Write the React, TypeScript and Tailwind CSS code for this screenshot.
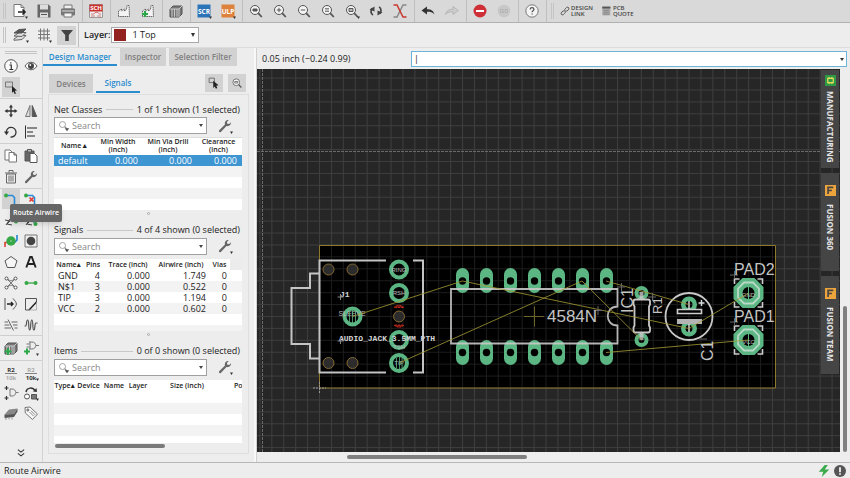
import type { ReactNode } from "react";
import { clsx } from "clsx";

function Glyph({ children, size = "size-4" }: { children: ReactNode; size?: string }) {
	return (
		<svg
			viewBox="0 0 16 16"
			className={clsx("shrink-0", size)}
			fill="none"
			stroke="#555"
			strokeWidth="1"
			aria-hidden="true"
		>
			{children}
		</svg>
	);
}

const MENU = <path d="M13 13.500h3l-1.500 2.500z" fill="#333" stroke="none" />;

const LENS = (
	<>
		<circle cx="7" cy="7" r="4.500" fill="#f4f4f4" />
		<path d="M10.200 10.200l3.600 3.800" strokeWidth="1.700" />
	</>
);

const FACTORY = (
	<path
		d="M2.500 13.500V8l3-2v2l3-2v2l2-1.500.5-4h2l.5 11z"
		fill="#f4f4f4"
		stroke="#666"
		strokeDasharray="1.6 .6"
	/>
);

const CHIP = (
	<>
		<path d="M2 6l3-3h9v8l-3 3H2z" fill="#777" stroke="#555" />
		<path d="M2 6h9v8M11 6l3-3M4 6v8M6.500 6v8M9 6v8" stroke="#ddd" strokeWidth=".8" />
	</>
);

const WRENCH = (
	<path
		d="M2.200 12.300L8 6.600C7.300 4 9 1.800 11.800 2L9.900 4l.4 1.800 1.900.3L14 4.300c.2 2.700-2 4.400-4.500 3.700l-5.700 6c-1.200.8-2.500-.6-1.600-1.700z"
		fill="#666"
		stroke="none"
	/>
);

type Tool = { name: string; icon: ReactNode; active?: boolean };

const FILE_TOOLS: Tool[][] = [
	[
		{
			name: "New",
			icon: (
				<>
					<path d="M2 1.500h7l3 3v9H2z" fill="#fff" stroke="#777" />
					<path d="M9 1.500v3h3" stroke="#777" />
					<path d="M6 9h7M10.500 6.500L13 9l-2.500 2.500" stroke="#222" strokeWidth="1.600" />
					{MENU}
				</>
			),
		},
		{
			name: "Save",
			icon: (
				<>
					<path d="M1.500 1.500h11l2 2v11h-13z" fill="#666" stroke="none" />
					<path d="M4 1.500h8v5H4zM4 9.500h8v5H4z" fill="#ddd" stroke="none" />
					<path d="M5 11.500h6" />
				</>
			),
		},
		{
			name: "Print",
			icon: (
				<>
					<path d="M4 2h8v4H4z" fill="#eee" stroke="#777" />
					<path d="M1.500 6h13v6h-13z" fill="#777" stroke="#777" />
					<path d="M4 10h8v4H4z" fill="#f4f4f4" stroke="#777" />
					<path d="M2 8h12" stroke="#ddd" />
				</>
			),
		},
	],
	[
		{
			name: "Schematic",
			icon: (
				<>
					<path d="M1.500 1.500h13v13h-13z" fill="#eee" stroke="#999" />
					<path d="M1.500 1.500h13v7h-13z" fill="#c9302c" stroke="none" />
					<text x="8" y="7.300" fontSize="6" fontWeight="bold" textAnchor="middle" fill="#fff" stroke="none">
						SCH
					</text>
					<path d="M3 11h3l1-1.500h3l1 1.500h2M3 13h4M9 13h4" stroke="#c66" strokeWidth=".8" />
				</>
			),
		},
	],
	[
		{ name: "Manufacturing", icon: FACTORY },
		{
			name: "Add to manufacturing",
			icon: (
				<>
					{FACTORY}
					<path d="M5 8v6M2 11h6" stroke="#2ca84a" strokeWidth="2.200" />
				</>
			),
		},
	],
	[{ name: "Library", icon: CHIP }],
	[
		{
			name: "Run script",
			icon: (
				<>
					<path d="M1.500 1.500h13v13h-13z" fill="#2c73b8" stroke="none" />
					<text x="8" y="10.500" fontSize="6.500" fontWeight="bold" textAnchor="middle" fill="#fff" stroke="none">
						SCR
					</text>
					{MENU}
				</>
			),
		},
		{
			name: "Run ULP",
			icon: (
				<>
					<path d="M1.500 1.500h13v13h-13z" fill="#dd813c" stroke="none" />
					<text x="8" y="10.500" fontSize="6.500" fontWeight="bold" textAnchor="middle" fill="#fff" stroke="none">
						ULP
					</text>
					{MENU}
				</>
			),
		},
	],
	[
		{
			name: "Zoom to fit",
			icon: (
				<>
					{LENS}
					<path d="M5 6h4v2H5z" fill="#555" />
				</>
			),
		},
		{
			name: "Zoom in",
			icon: (
				<>
					{LENS}
					<path d="M4.800 7h4.400M7 4.800v4.400" />
				</>
			),
		},
		{
			name: "Zoom out",
			icon: (
				<>
					{LENS}
					<path d="M4.800 7h4.400" />
				</>
			),
		},
		{
			name: "Zoom redraw",
			icon: (
				<>
					{LENS}
					<path d="M5 5.500h4M5 7h4M5 8.500h4" strokeWidth=".7" />
				</>
			),
		},
		{
			name: "Zoom select",
			icon: (
				<>
					{LENS}
					<path d="M5 5.500h4v3H5z" fill="#bbb" />
					{MENU}
				</>
			),
		},
		{
			name: "Refresh",
			icon: (
				<>
					<path d="M5 12c-2.500-1-2.500-5-.8-6.500M11 4c2.500 1 2.500 5 .8 6.500" stroke="#444" strokeWidth="1.700" />
					<path d="M1.500 6.500L6.500 3.500v5zM14.500 9.500l-5 3v-5z" fill="#444" stroke="none" />
				</>
			),
		},
		{
			name: "Crossing",
			icon: (
				<>
					<path d="M1.500 14h3.500l6-12h3.500" stroke="#888" strokeWidth="1.500" />
					<path d="M1.500 2h3.500l6 12h3.500" stroke="#c8372f" strokeWidth="1.500" />
				</>
			),
		},
	],
	[
		{
			name: "Undo",
			icon: (
				<path d="M1.500 7.500L7 3.500v2.700c4 0 6.500 1.300 7.500 5.300C12.500 9 10.500 8.800 7 8.800v2.700z" fill="#333" stroke="none" />
			),
		},
		{
			name: "Redo",
			icon: (
				<path d="M14.500 7.500L9 3.500v2.700c-4 0-6.500 1.300-7.500 5.300 2-2.500 4-2.700 7.500-2.700v2.700z" fill="#ccc" stroke="#aaa" strokeWidth=".7" />
			),
		},
	],
	[
		{
			name: "Stop",
			icon: (
				<>
					<circle cx="8" cy="8" r="6.500" fill="#cf3038" stroke="none" />
					<path d="M4 8h8" stroke="#fff" strokeWidth="2" />
				</>
			),
		},
		{
			name: "Go",
			icon: (
				<>
					<circle cx="8" cy="8" r="6.300" fill="#c8c8c8" stroke="none" />
					<path d="M7.500 6.500h-3v3h3V8H6M9 6.500h2.500v3H9z" stroke="#b4b4b4" />
				</>
			),
		},
	],
	[
		{
			name: "Help",
			icon: (
				<>
					<circle cx="8" cy="8" r="6.200" fill="#f4f4f4" stroke="#777" />
					<path d="M6.200 6.500c0-2.400 3.700-2.400 3.700 0 0 1.200-1.800 1.300-1.800 2.800M8.100 10.400v1.200" strokeWidth="1.300" />
				</>
			),
		},
	],
];

const PALETTE: { pad: string; tools: Tool[] }[] = [
	{
		pad: "gap-y-px pt-[2px] pb-px",
		tools: [
			{
				name: "Info",
				icon: (
					<>
						<circle cx="8" cy="8" r="6.300" fill="#fafafa" />
						<path d="M6.500 7h1.800v4.500M6.300 11.500h4M7.800 4.200v1.300" stroke="#333" strokeWidth="1.200" />
					</>
				),
			},
			{
				name: "Show",
				icon: (
					<>
						<path d="M2 8c3-5 9-5 12 0-3 5-9 5-12 0z" fill="#fff" />
						<circle cx="8" cy="8" r="3" fill="#444" stroke="none" />
						<circle cx="7.300" cy="7" r=".9" fill="#fff" stroke="none" />
					</>
				),
			},
			{
				name: "Group",
				active: true,
				icon: (
					<>
						<path d="M2.500 3h7v5h-7z" stroke="#777" />
						<path d="M9 7l5 4.500-2.300.3 1.300 2.600-1.300.5-1.200-2.500L9 13.800z" fill="#222" stroke="none" />
					</>
				),
			},
		],
	},
	{
		pad: "gap-y-px pt-[2px] pb-px",
		tools: [
			{
				name: "Move",
				icon: (
					<>
						<path d="M8 3v10M3 8h10" stroke="#333" strokeWidth="1.300" />
						<path d="M8 1.500l2 3H6zM8 14.500l2-3H6zM1.500 8l3-2v4zM14.500 8l-3-2v4z" fill="#333" stroke="none" />
					</>
				),
			},
			{
				name: "Mirror",
				icon: (
					<>
						<path d="M7 2.500v11H2.500z" fill="#ddd" stroke="#777" />
						<path d="M9.200 2.500v11h4.500z" fill="#555" />
					</>
				),
			},
			{
				name: "Rotate",
				icon: (
					<>
						<path d="M3.300 8.500C3 1.500 13.500 2 13 8.800c-.3 3-3 4.500-5.500 4.200" stroke="#333" strokeWidth="1.300" />
						<path d="M1 7.500h5l-2.500 3.800z" fill="#333" stroke="none" />
					</>
				),
			},
			{
				name: "Align",
				icon: (
					<>
						<path d="M2.500 1.500v13" stroke="#333" />
						<path d="M4 4h10M4 8h6M4 12h8" stroke="#888" strokeWidth="1.800" />
					</>
				),
			},
		],
	},
	{
		pad: "gap-y-px pt-[2px] pb-px",
		tools: [
			{
				name: "Copy",
				icon: (
					<>
						<path d="M2 2h5l2 2v8H2z" fill="#fff" stroke="#777" />
						<path d="M6 4.500h5l2.500 2.500v7H6z" fill="#fff" stroke="#777" />
						<path d="M11 4.500V7h2.500" />
					</>
				),
			},
			{
				name: "Paste",
				icon: (
					<>
						<path d="M2 3h9v10H2z" fill="#666" />
						<path d="M4.500 1.500h4v2.500h-4z" fill="#bbb" />
						<path d="M7 5.500h4.500L14 8v6.500H7z" fill="#fff" />
					</>
				),
			},
			{
				name: "Delete",
				icon: (
					<>
						<path d="M3.500 5h9v9h-9z" fill="#eee" stroke="#666" />
						<path d="M2 4h12M6 3.500v-2h4v2M6 6.500v6M8 6.500v6M10 6.500v6" stroke="#666" />
					</>
				),
			},
			{ name: "Change", icon: WRENCH },
		],
	},
	{
		pad: "gap-y-px",
		tools: [
			{
				name: "Route Airwire",
				active: true,
				icon: (
					<>
						<path d="M3 4.500h6.500l2 2V15" stroke="#2a8ad4" strokeWidth="1.600" />
						<circle cx="3" cy="4.500" r="2" fill="#36a845" stroke="none" />
					</>
				),
			},
			{
				name: "Ripup",
				icon: (
					<>
						<path d="M3 4.500h6.500l2 2V15" stroke="#2a8ad4" strokeWidth="1.600" />
						<circle cx="3" cy="4.500" r="2" fill="#36a845" stroke="none" />
						<path d="M6.500 6.500l4 4m0-4l-4 4" stroke="#e03c35" strokeWidth="1.700" />
					</>
				),
			},
			{
				name: "Route multiple",
				icon: (
					<>
						<path d="M2 8l5 1-3 3 5 1M3 13l4-6" stroke="#444" />
						<circle cx="13" cy="9.500" r="2" fill="#36a845" stroke="none" />
					</>
				),
			},
			{
				name: "Fanout",
				icon: (
					<>
						<path d="M2 8l5 1-3 3 5 1M3 13l4-6" stroke="#444" />
						<path d="M7 6l5 6" stroke="#2a8ad4" />
						<circle cx="12.500" cy="12" r="2" fill="#36a845" stroke="none" />
					</>
				),
			},
			{
				name: "Via",
				icon: (
					<>
						<path d="M2 14V9.500h3" stroke="#d94b3f" strokeWidth="1.700" />
						<path d="M14 2v5l-3 3" stroke="#2a8ad4" strokeWidth="1.700" />
						<circle cx="8" cy="8" r="4.700" fill="#36a845" stroke="none" />
						<circle cx="8" cy="8" r="1" fill="#7cc586" stroke="none" />
					</>
				),
			},
			{
				name: "Hole",
				icon: (
					<>
						<path d="M2 2h12v12H2z" fill="#eee" stroke="#777" />
						<circle cx="8" cy="8" r="4.300" fill="#444" stroke="none" />
					</>
				),
			},
			{ name: "Polygon", icon: <path d="M8 2.500l6 4.300-2.300 6.700H4.300L2 6.800z" fill="#f6f6f6" /> },
			{ name: "Text", icon: <path d="M3.300 13.500L7.200 3h1.600l3.900 10.500M5 10h6" stroke="#222" strokeWidth="1.900" /> },
			{
				name: "Ratsnest",
				icon: (
					<>
						<path d="M4 4l8 8M12 4l-8 8M4.500 3.500c2 3 5 3 7 0M4.500 12.500c2-3 5-3 7 0" stroke="#777" />
						<circle cx="3.500" cy="3.500" r="1.500" fill="#fff" />
						<circle cx="12.500" cy="3.500" r="1.500" fill="#fff" />
						<circle cx="3.500" cy="12.500" r="1.500" fill="#fff" />
						<circle cx="12.500" cy="12.500" r="1.500" fill="#fff" />
					</>
				),
			},
			{
				name: "Signal",
				icon: (
					<>
						<path d="M3 8h10" stroke="#36a845" strokeWidth="1.300" />
						<circle cx="3.500" cy="8" r="2" fill="#36a845" stroke="none" />
						<circle cx="12.500" cy="8" r="2" fill="#36a845" stroke="none" />
					</>
				),
			},
			{
				name: "Split",
				icon: (
					<>
						<path d="M2 2v12M10 2.500c4.500 5 4.500 6 0 11" />
						<path d="M4 8h6M8 6l2 2-2 2" stroke="#222" strokeWidth="1.300" />
					</>
				),
			},
			{
				name: "Miter",
				icon: (
					<>
						<path d="M2.500 14V2.500h11V6M2.500 14H6" />
						<path d="M6 14l7.500-8" stroke="#222" strokeWidth="1.500" />
						<path d="M13.500 6v8H6" stroke="#999" strokeWidth=".7" />
					</>
				),
			},
			{
				name: "Slice",
				icon: <path d="M1.500 5h3.500M1.500 8h5M1.500 11h6.500M8.500 5h6M10 8h4.500M11.500 11h3M5 2.500l5.500 11" stroke="#666" />,
			},
			{
				name: "Meander",
				icon: (
					<path
						d="M1.500 9h1c1.500 0 .5-6 2.200-6s.4 10 2 10 .4-10 2.100-10 .4 10 2 10 .5-7 2.200-7h1.500"
						strokeWidth="1.200"
					/>
				),
			},
		],
	},
	{
		pad: "py-0.5",
		tools: [
			{
				name: "Add part",
				icon: (
					<>
						{CHIP}
						<path d="M5 8v7M1.500 11.500h7" stroke="#2ca84a" strokeWidth="2" />
					</>
				),
			},
			{
				name: "Add gate",
				icon: (
					<>
						<path d="M6 2h3c5 0 5 7 0 7H6M7 2v7M3.500 4h3M3.500 7h3M13 5.500h3" stroke="#777" />
						<path d="M4 8.500v6M1 11.500h6" stroke="#2ca84a" strokeWidth="2" />
						{MENU}
					</>
				),
			},
		],
	},
	{
		pad: "pt-[2px]",
		tools: [
			{
				name: "Name",
				icon: (
					<g stroke="none" fontSize="6" fontWeight="bold" textAnchor="middle">
						<text x="8" y="7" fill="#333">R2</text>
						<text x="8" y="14.500" fill="#aaa">10k</text>
						<path d="M2 8h12v.8H2z" fill="#666" />
					</g>
				),
			},
			{
				name: "Value",
				icon: (
					<g stroke="none" fontSize="6" fontWeight="bold" textAnchor="middle">
						<text x="8" y="7" fill="#aaa">R2</text>
						<text x="8" y="14.500" fill="#333">10k</text>
						<path d="M2 8h12v.8H2z" fill="#666" />
						{MENU}
					</g>
				),
			},
			{
				name: "Gate swap",
				icon: (
					<>
						<path d="M7 4h2c5 0 5 7 0 7H7zM13 7.500h2.500" stroke="#777" />
						<path d="M3.500 1v4M1.500 3h4M3.500 11v4M1.500 13h4" stroke="#333" strokeWidth="1.200" />
					</>
				),
			},
			{
				name: "Replace",
				icon: (
					<>
						<path d="M3 7c1-5 7-5 9-1" stroke="#333" strokeWidth="1.500" />
						<path d="M10 6.500l4 .5-.5-4z" fill="#333" stroke="none" />
						<circle cx="4" cy="11.500" r="2.500" fill="#fff" />
						<path d="M8.500 9.500h5v4.500h-5z" fill="#777" />
						{MENU}
					</>
				),
			},
			{
				name: "Package",
				icon: (
					<>
						<path d="M1.500 9.500L6 4.500l8.500-1L11 9z" fill="#888" stroke="none" />
						<path d="M1.500 9.500L11 9v3l-9.500 1zM11 9l3.500-5.500v3L11 12z" fill="#555" stroke="none" />
						<path d="M3 13v2M6 12.500v2M9 12.500v2" stroke="#999" />
					</>
				),
			},
			{
				name: "Attribute",
				icon: (
					<>
						<path d="M2 2.500l5-.5 7.500 7-5 5.500L2.300 8z" fill="#f6f6f6" stroke="#777" />
						<circle cx="4.800" cy="5" r="1" />
						<path d="M6.500 7l4 4M8 5.700l4 4" stroke="#888" />
					</>
				),
			},
		],
	},
];

const VIEW_TOOLS: Tool[] = [
	{
		name: "Layers",
		icon: (
			<>
				<path d="M1 12l5-3.500h7L9 12.500l-8 .8z" fill="#ddd" stroke="#666" />
				<path d="M1 9l5-3.500h7L9 9.500z" fill="#ddd" stroke="#666" />
				<path d="M1 6l5-3.500 7-.5L9 6z" fill="#555" />
				{MENU}
			</>
		),
	},
	{
		name: "Grid",
		icon: (
			<>
				<path d="M4.500 1.500v12M8 1.500v12M11.500 1.500v12M2 4h12M2 7.500h12M2 11h12" stroke="#777" />
				{MENU}
			</>
		),
	},
	{ name: "Filter", active: true, icon: <path d="M2 3h12L9.800 8v6H6.200V8z" fill="#444" stroke="none" /> },
];

const NET_CLASSES = [{ name: "default", width: "0.000", drill: "0.000", clearance: "0.000" }];

const SIGNALS = [
	{ name: "GND", pins: 4, trace: "0.000", airwire: "1.749", vias: 0 },
	{ name: "N$1", pins: 3, trace: "0.000", airwire: "0.522", vias: 0 },
	{ name: "TIP", pins: 3, trace: "0.000", airwire: "1.194", vias: 0 },
	{ name: "VCC", pins: 2, trace: "0.000", airwire: "0.602", vias: 0 },
];

const DOCK = [
	{ label: "MANUFACTURING", kind: "board", pad: "gap-[5px] pt-[5px]" },
	{ label: "FUSION 360", kind: "fusion", pad: "gap-2 pt-3" },
	{ label: "FUSION TEAM", kind: "fusion", pad: "gap-2 pt-3" },
];

const PINS = [462, 486, 510, 534, 558, 582, 606];

function ToolButton({ tool, className }: { tool: Tool; className: string }) {
	return (
		<button
			type="button"
			aria-label={tool.name}
			className={clsx("flex items-center justify-center", tool.active && "bg-[#d2d2d2]", className)}
		>
			<Glyph>{tool.icon}</Glyph>
		</button>
	);
}

function Divider() {
	return <div className="mr-px ml-0.5 w-px self-stretch bg-[#bfbfbf]" />;
}

function Grip() {
	return <div className="mr-0.5 ml-[3px] h-4 w-[3px] border-x border-[#c4c4c4]" />;
}

function MainToolbar() {
	return (
		<header className="flex h-[23px] items-center border-b border-[#b0b0b0] bg-[#d9d9d9]">
			<Grip />
			{FILE_TOOLS.map((group, i) => (
				<div key={i} className="flex items-center self-stretch">
					{i > 0 && <Divider />}
					{group.map((tool) => (
						<ToolButton key={tool.name} tool={tool} className="h-5 w-6" />
					))}
				</div>
			))}
			<Divider />
			<Grip />
			<a href="#design-link" className="ml-1 flex items-center gap-px text-[6px] leading-[6px] font-semibold text-[#444]">
				<Glyph size="size-2.5">
					<path d="M7 9.500c-2-2 2-6 4-7.500 2-1 4 1 3 3L11 8.500M9 6.500c2 2-2 6-4 7.500-2 1-4-1-3-3L5 7.500" strokeWidth="1.600" />
				</Glyph>
				<span className="flex flex-col">
					<span>DESIGN</span>
					<span>LINK</span>
				</span>
			</a>
			<a href="#pcb-quote" className="ml-2 flex items-center gap-0.5 text-[6px] leading-[6px] font-semibold text-[#444]">
				<Glyph size="size-2.5">
					<path d="M2 1h13v14H2z" fill="#aaa" stroke="none" />
					<path d="M2 1h13v3H2z" fill="#555" stroke="none" />
					<path d="M4 7h9M4 10h9M4 13h9" stroke="#777" />
				</Glyph>
				<span className="flex flex-col">
					<span>PCB</span>
					<span>QUOTE</span>
				</span>
			</a>
		</header>
	);
}

function ViewToolbar() {
	return (
		<div className="flex h-[25px] items-center border-b border-[#dcdcdc] bg-[#ededed]">
			<Grip />
			<div className="ml-[3px] flex gap-1">
				{VIEW_TOOLS.map((tool) => (
					<ToolButton key={tool.name} tool={tool} className="h-[19px] w-[19px]" />
				))}
			</div>
			<Divider />
			<label htmlFor="layer" className="ml-1 text-[9px] font-semibold">
				Layer:
			</label>
			<div className="relative ml-px">
				<span className="absolute top-0.5 left-[3px] size-3 bg-[#92211f]" />
				<select
					id="layer"
					className="block h-4 w-[88px] appearance-none border border-[#a8a8a8] bg-white pl-5 text-[9px] leading-[14px] font-medium"
				>
					<option>1 Top</option>
				</select>
				<span className="pointer-events-none absolute top-[6px] right-1 border-x-[2px] border-t-[4px] border-x-transparent border-t-[#333]" />
			</div>
		</div>
	);
}

function Palette() {
	return (
		<nav aria-label="Tools" className="flex w-[43px] shrink-0 flex-col border-r border-[#d4d4d4]">
			<div className="mx-[5px] mt-[3px] h-[3px] border-y border-[#c4c4c4]" />
			{PALETTE.map((group, i) => (
				<div
					key={i}
					className={clsx(
						"grid grid-cols-2 px-px",
						i < PALETTE.length - 1 && "border-b border-[#cfcfcf]",
						group.pad,
					)}
				>
					{group.tools.map((tool) => (
						<div
							key={tool.name}
							className={clsx("relative flex justify-center", tool.name === "Group" && "col-span-2 w-5")}
						>
							<ToolButton tool={tool} className="h-5 w-[18px]" />
							{tool.name === "Route Airwire" && (
								<div
									role="tooltip"
									className="absolute top-[15px] left-[9px] z-10 rounded-xs bg-[#666] px-[3px] text-[7px] leading-[18px] font-semibold whitespace-nowrap text-white shadow-md"
								>
									Route Airwire
								</div>
							)}
						</div>
					))}
				</div>
			))}
			<button type="button" aria-label="More tools" className="mt-auto mb-1 flex justify-center">
				<Glyph size="size-2.5">
					<path d="M3 2.500l5 4 5-4M3 8.500l5 4 5-4" stroke="#333" strokeWidth="1.700" />
				</Glyph>
			</button>
		</nav>
	);
}

function Section({ title, count, children }: { title: string; count: string; children: ReactNode }) {
	return (
		<section>
			<div className="flex h-[15px] items-center text-[9px] leading-3 font-medium">
				<h2>{title}</h2>
				<div className="mx-1 h-px flex-1 bg-[#c8c8c8]" />
				<span className="mr-[3px]">{count}</span>
			</div>
			<div className="flex items-center">
				<div className="relative w-[153px]">
					<input
						type="search"
						aria-label={`Search ${title}`}
						placeholder="Search"
						className="block h-[17px] w-full appearance-none border border-[#a0a0a0] bg-white pl-[17px] text-[9px] leading-3 placeholder:text-[#888] focus:outline-none"
					/>
					<span className="pointer-events-none absolute top-[3px] left-1">
						<Glyph size="size-3">
							<circle cx="6" cy="6" r="4" stroke="#888" />
							<path d="M9 9l4 4" stroke="#888" strokeWidth="1.500" />
							<path d="M9 11h6l-3 4z" fill="#555" stroke="none" />
						</Glyph>
					</span>
					<span className="pointer-events-none absolute top-[7px] right-1 border-x-[2px] border-t-[3px] border-x-transparent border-t-[#444]" />
				</div>
				<button type="button" aria-label={`${title} options`} className="ml-2.5">
					<Glyph>
						{WRENCH}
						{MENU}
					</Glyph>
				</button>
			</div>
			{children}
		</section>
	);
}

function Splitter() {
	return (
		<div className="mb-1.5 flex h-[7px] items-center justify-center">
			<div className="size-[3px] rounded-full border border-[#aaa]" />
		</div>
	);
}

function Stripes({ count, offset, cols }: { count: number; offset: number; cols: number }) {
	return Array.from({ length: count }, (_, i) => (
		<tr key={i} className={clsx("h-[11px]", (i + offset) % 2 === 0 ? "bg-white" : "bg-[#f3f3f3]")}>
			<td colSpan={cols} />
		</tr>
	));
}

function DesignManager() {
	return (
		<aside className="flex w-[213px] shrink-0 flex-col border-r-2 border-[#f8f8f8]">
			<div role="tablist" className="flex h-[18px] gap-[3px] text-[8px] font-semibold">
				<button
					type="button"
					role="tab"
					aria-selected="true"
					className="w-[74px] border-b-2 border-[#2b8cce] pt-px text-[#2b8cce]"
				>
					Design Manager
				</button>
				<button type="button" role="tab" aria-selected="false" className="w-[46px] bg-[#d2d2d2] text-[#808080]">
					Inspector
				</button>
				<button type="button" role="tab" aria-selected="false" className="w-[68px] bg-[#d2d2d2] text-[#808080]">
					Selection Filter
				</button>
			</div>
			<div className="mt-2 flex h-[19px] items-start gap-[3px] px-1.5 text-[8px] font-semibold">
				<button type="button" className="h-full w-11 bg-[#d2d2d2] text-[#808080]">
					Devices
				</button>
				<button type="button" className="h-full w-11 border-b-2 border-[#2b8cce] pt-px text-[#2b8cce]">
					Signals
				</button>
				<div className="ml-auto flex gap-[5px] pr-0.5">
					<button type="button" aria-label="Select in canvas" className="flex size-[18px] items-center justify-center bg-[#d2d2d2]">
						<Glyph size="size-3">
							<path d="M1.500 1.500h7v6h-7z" />
							<path d="M7 5l7 6-3 .5 1.500 3-2 1L9 12.500l-2 2z" fill="#222" stroke="none" />
						</Glyph>
					</button>
					<button type="button" aria-label="Zoom to selection" className="flex size-[18px] items-center justify-center bg-[#d2d2d2]">
						<Glyph size="size-3">
							{LENS}
							<path d="M5 6h4v2H5z" />
						</Glyph>
					</button>
				</div>
			</div>
			<div className="mx-[5px] mt-px mb-2 flex-1 border border-[#dedede] px-[5px] pt-[7px]">
				<Section title="Net Classes" count="1 of 1 shown (1 selected)">
					<table className="mt-[3px] w-[188px] table-fixed bg-white text-[9px] leading-[11px] font-medium">
						<colgroup>
							<col className="w-[41px]" />
							<col className="w-[46px]" />
							<col className="w-[54px]" />
							<col />
						</colgroup>
						<thead>
							<tr className="h-[17px] border-t border-[#ddd] text-[7px] leading-[8px]">
								<th className="font-semibold">Name▲</th>
								<th className="font-semibold">Min Width<br />(inch)</th>
								<th className="font-semibold">Min Via Drill<br />(inch)</th>
								<th className="font-semibold">Clearance<br />(inch)</th>
							</tr>
						</thead>
						<tbody>
							{NET_CLASSES.map((row) => (
								<tr key={row.name} className="h-[11px] bg-[#3d95d2] text-right text-white">
									<td className="pl-1 text-left">{row.name}</td>
									<td className="pr-[3px]">{row.width}</td>
									<td className="pr-[3px]">{row.drill}</td>
									<td className="pr-[5px]">{row.clearance}</td>
								</tr>
							))}
							<Stripes count={4} offset={1} cols={4} />
						</tbody>
					</table>
				</Section>
				<Splitter />
				<Section title="Signals" count="4 of 4 shown (0 selected)">
					<table className="mt-[4px] w-[188px] table-fixed bg-white text-[9px] leading-[11px] font-medium">
						<colgroup>
							<col className="w-[29px]" />
							<col className="w-[20px]" />
							<col className="w-[50px]" />
							<col className="w-[56px]" />
							<col className="w-[21px]" />
							<col />
						</colgroup>
						<thead>
							<tr className="h-[11px] text-[7px]">
								<th className="font-semibold whitespace-nowrap">Name▴</th>
								<th className="font-semibold">Pins</th>
								<th className="font-semibold">Trace (inch)</th>
								<th className="font-semibold">Airwire (inch)</th>
								<th className="font-semibold">Vias</th>
								<th className="bg-[#ececec]" />
							</tr>
						</thead>
						<tbody>
							{SIGNALS.map((row, i) => (
								<tr key={row.name} className={clsx("h-[11px] text-right", i % 2 === 1 && "bg-[#f3f3f3]")}>
									<td className="pl-1 text-left">{row.name}</td>
									<td className="pr-[3px]">{row.pins}</td>
									<td className="pr-[3px]">{row.trace}</td>
									<td className="pr-[3px]">{row.airwire}</td>
									<td className="pr-[3px]">{row.vias}</td>
									<td />
								</tr>
							))}
							<Stripes count={1} offset={0} cols={6} />
							<tr className="h-1.5 bg-[#f3f3f3]">
								<td colSpan={6} />
							</tr>
						</tbody>
					</table>
				</Section>
				<Splitter />
				<Section title="Items" count="0 of 0 shown (0 selected)">
					<div className="mt-[4px] w-[188px] overflow-hidden">
						<table className="w-full table-fixed bg-white text-[7px] leading-[11px]">
							<colgroup>
								<col className="w-[21px]" />
								<col className="w-[27px]" />
								<col className="w-[24px]" />
								<col className="w-[24px]" />
								<col className="w-[80px]" />
								<col />
							</colgroup>
							<thead>
								<tr className="h-[12px] text-center whitespace-nowrap">
									<th className="font-semibold">Type▴</th>
									<th className="font-semibold">Device</th>
									<th className="font-semibold">Name</th>
									<th className="font-semibold">Layer</th>
									<th className="pr-1.5 font-semibold">Size (inch)</th>
									<th className="pl-1 text-left font-semibold">Po</th>
								</tr>
							</thead>
							<tbody>
								<Stripes count={4} offset={0} cols={6} />
							</tbody>
						</table>
						<div className="bg-white pt-[7px]">
							<div className="bg-[#ededed] pt-px pb-0.5">
								<div className="ml-px h-1 w-[110px] rounded-full bg-[#7a7a7a]" />
							</div>
						</div>
					</div>
				</Section>
			</div>
		</aside>
	);
}

function Ring({ x, y, outer, inner }: { x: number; y: number; outer: number; inner: number }) {
	return <circle cx={x} cy={y} r={(outer + inner) / 2} fill="none" stroke="#5bb684" strokeWidth={outer - inner} />;
}

function WirePad({ x, y, label }: { x: number; y: number; label: string }) {
	return (
		<g transform={`translate(${x} ${y})`}>
			<path d="M-6-15H6L15-6V6L6 15H-6L-15 6V-6z" fill="#5bb684" />
			<path d="M-4.500-10.500h9l6 6v9l-6 6h-9l-6-6v-9z" fill="none" stroke="#b9d8c6" strokeWidth="1.800" />
			<circle r="6" fill="#000" />
			<path d="M0-9V6" stroke="#5bb684" />
			<text y="4" textAnchor="middle" fontSize="6" fill="#bbb">{label}</text>
			<path d="M-14-9v-5h5M9-14h5v5M14 9v5H9M-9 14h-5V9" fill="none" stroke="#ccc" strokeWidth="1.600" />
		</g>
	);
}

function Board() {
	return (
		<svg
			viewBox="257 69 583 383"
			preserveAspectRatio="xMinYMin slice"
			className="block h-full w-full font-['Liberation_Sans',sans-serif]"
			role="img"
			aria-label="Board layout"
		>
			<defs>
				<pattern id="grid" x="319" y="387.500" width="11.920" height="11.920" patternUnits="userSpaceOnUse">
					<path d="M.5 0v11.920M0 .5h11.920" stroke="#fff" strokeOpacity=".11" strokeWidth="1" />
				</pattern>
			</defs>
			<path d="M257 69h1200v900H257z" fill="#262626" />
			<path d="M319.500 245.500h456V388h-456z" fill="#000" />
			<path d="M257 69h1200v900H257z" fill="url(#grid)" />
			<path d="M257 151.500h1200M262.500 69v900" stroke="#6a6a6a" strokeDasharray="3 1" />
			<path d="M319.500 245.500h456V388h-456z" fill="none" stroke="#8f7a2c" />
			<path d="M313 388h13M319.500 382v12" stroke="#999" strokeDasharray="2 1" />

			{[[328.500, 269.500], [352.500, 269.500], [328.500, 363], [352.500, 363], [399, 316.500]].map(([x, y]) => (
				<circle key={`${x}-${y}`} cx={x} cy={y} r="5.500" fill="#2c2c2c" stroke="#86682f" />
			))}
			<Ring x={399} y={269.500} outer={10} inner={6} />
			<Ring x={399} y={293} outer={10} inner={6} />
			<Ring x={399} y={340} outer={10} inner={6} />
			<Ring x={399} y={363} outer={10} inner={6} />
			<Ring x={352.500} y={316.500} outer={10} inner={6} />
			<path d="M394 307.500c3-3 7-3 10 0zM394 325c3 3 7 3 10 0z" stroke="#c0281c" strokeDasharray="2 1" fill="#7a1a14" />

			<g fill="none" stroke="#c4c4c4" strokeWidth="2">
				<path d="M386 260.500h-66.500v112H386M413 260.500h10v112h-10" />
				<path d="M319 273.500h-9V288h-18.500v56H310v14.500h9" />
			</g>
			<g fill="#bbb" fontSize="6" textAnchor="middle">
				<text x="399" y="272">RING</text>
				<text x="399" y="295">RSH</text>
				<text x="399" y="349">TSH</text>
				<text x="399" y="365">TIP</text>
				<text x="352" y="316" fontSize="7">SLEEVE</text>
			</g>
			<path d="M352.500 309v15M349.500 311v11M355.500 311v11M396.500 358v10M399.500 357v12M402 358v10" stroke="#5bb684" strokeWidth=".8" />
			<g fill="#d4d4d4" fontSize="8" fontWeight="bold" className="font-['Liberation_Mono',monospace]">
				<text x="340" y="297">J1</text>
				<text x="339" y="341">AUDIO_JACK_3.5MM_PTH</text>
			</g>
			<path d="M337.500 297h6M340.500 294v6M337.500 341h6M340.500 338v6" stroke="#888" />

			{PINS.map((x) => (
				<g key={x}>
					<rect x={x - 6} y="268" width="13" height="25" rx="6.500" fill="#5bb684" />
					<rect x={x - 6} y="340" width="13" height="25" rx="6.500" fill="#5bb684" />
					<circle cx={x + 0.500} cy="281" r="3.700" fill="#000" />
					<circle cx={x + 0.500} cy="352.500" r="3.700" fill="#000" />
				</g>
			))}
			<path
				d="M451 289h166.500v17.500c-13 0-13 19 0 19V343.500H451z"
				fill="none"
				stroke="#c8c8c8"
				strokeOpacity=".9"
				strokeWidth="1.800"
			/>
			<path d="M524 316.500h20M534.500 306.500v20" stroke="#6c6527" />

			<g fill="none" stroke="#c8c8c8" strokeWidth="1.800">
				<Ring x={641.500} y={293} outer={7} inner={3} />
				<Ring x={641.500} y={340} outer={7} inner={3} />
				<path d="M633.500 301.500q0-2 2-2h12.500q2 0 2 2v3l-1 2v19l1 2v3q0 2-2 2h-12.500q-2 0-2-2v-3l1-2v-19l-1-2z" />
				<path d="M641.500 292v7M641.500 333v7" strokeWidth="4" strokeOpacity=".8" />
				<circle cx="689" cy="316.500" r="23.500" />
			</g>
			<Ring x={689} y={304.500} outer={8} inner={3.500} />
			<Ring x={689} y={328.500} outer={8} inner={3.500} />
			<path d="M677.500 309.500h24v4h-24z" fill="#000" stroke="#ccc" strokeWidth="1.600" />
			<path d="M677 319h25v5h-25z" fill="#b4b4b4" />
			<path d="M698.500 303h6M701.500 300v6M689 301v8M689 324v8" stroke="#ddd" strokeWidth="1.400" />

			<WirePad x={748.500} y={293} label="GND" />
			<WirePad x={748.500} y={340} label="VCC" />

			<g stroke="#a59b35" strokeOpacity=".8" fill="none">
				<path d="M352.500 316.500L462.500 281 689 328.500l59.500-35.500" />
				<path d="M399 363l183-82 59.500 59M606 281l83 23.500M606 352.500L748.500 340" />
			</g>
			<path d="M598 306v9M594 310.500h8M617 287h8M621.500 283v8M648 297h8M652.500 293v8M730 275h8M734.500 271v8M730 322h8M734.500 318v8M699 339h8" stroke="#666" />

			<g fill="#c4c4c4" fontSize="16">
				<text x="547" y="322" fontSize="17">4584N</text>
				<text x="734" y="275">PAD2</text>
				<text x="734" y="322">PAD1</text>
				<text transform="translate(633 313) rotate(-90)">IC1</text>
				<text transform="translate(662 314) rotate(-90)" fontSize="13">R1</text>
				<text transform="translate(713 361) rotate(-90)">C1</text>
			</g>
		</svg>
	);
}

function Dock() {
	return (
		<div className="absolute top-px right-px flex flex-col gap-[5px]">
			{DOCK.map((tab) => (
				<button
					key={tab.label}
					type="button"
					className={clsx(
						"flex h-[98px] w-[18px] flex-col items-center bg-[#454545] text-[8px] font-bold text-[#e6e6e6]",
						tab.pad,
					)}
				>
					<Glyph size="size-[11px]">
						{tab.kind === "board" ? (
							<>
								<path d="M0 0h16v16H0z" fill="#2f9a46" stroke="none" />
								<path d="M4 5h8v6H4zM6 3v2M10 3v2M6 11v2M10 11v2" stroke="#e8d95a" strokeWidth="1.800" />
							</>
						) : (
							<>
								<path d="M0 0h16v16H0z" fill="#eda43c" stroke="none" />
								<path d="M4.500 13V3.500H12M4.500 8H10" stroke="#444" strokeWidth="2.400" />
							</>
						)}
					</Glyph>
					<span className="leading-[10px] whitespace-nowrap [writing-mode:vertical-rl]">{tab.label}</span>
				</button>
			))}
		</div>
	);
}

function Workspace() {
	return (
		<main className="flex min-w-0 flex-1 flex-col border-l border-[#d0d0d0]">
			<div className="flex h-[21px] items-center pr-[3px]">
				<label htmlFor="command" className="w-[154px] shrink-0 pl-[5px] text-[9px] font-medium">
					0.05 inch (−0.24 0.99)
				</label>
				<div className="relative flex-1">
					<input
						id="command"
						type="text"
						defaultValue="|"
						className="block h-4 w-full border border-[#6db3dc] bg-white pl-[2px] text-[9px] leading-3 focus:outline-none"
					/>
					<span className="pointer-events-none absolute top-[7px] right-[3px] border-x-[2px] border-t-[3px] border-x-transparent border-t-[#333]" />
				</div>
			</div>
			<div className="flex min-h-0 flex-1">
				<div className="relative min-w-0 flex-1">
					<div className="absolute inset-0 overflow-hidden">
						<Board />
					</div>
					<Dock />
				</div>
				<div className="flex w-2.5 flex-col items-center">
					<div className="mt-auto h-[38%] w-1 rounded-full bg-[#808080]" />
				</div>
			</div>
			<div className="flex h-[10px] items-center">
				<div className="ml-[90px] h-1 w-[180px] rounded-full bg-[#808080]" />
			</div>
		</main>
	);
}

export default function App() {
	return (
		<div className="flex h-screen flex-col overflow-hidden bg-[#ededed] font-['Open_Sans','Noto_Sans',sans-serif] text-[#222]">
			<MainToolbar />
			<ViewToolbar />
			<div className="flex min-h-0 flex-1">
				<Palette />
				<DesignManager />
				<Workspace />
			</div>
			<footer className="flex h-4 items-center border-t border-[#b8b8b8] px-1 text-[9px] leading-3 font-medium">
				<span>Route Airwire</span>
				<span className="ml-auto flex items-center gap-1">
					<Glyph size="size-3">
						<path d="M9 0L1 9h6l-2 7 10-10H9l4-6z" fill="#3aaa4c" stroke="none" />
					</Glyph>
					<Glyph size="size-3">
						<circle cx="8" cy="8" r="8" fill="#555" stroke="none" />
						<path d="M8 3v6.500M8 11v2" stroke="#fff" strokeWidth="2.200" />
					</Glyph>
				</span>
			</footer>
		</div>
	);
}
